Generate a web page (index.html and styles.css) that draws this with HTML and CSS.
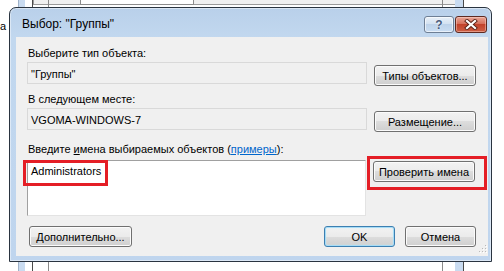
FILE: index.html
```html
<!DOCTYPE html>
<html lang="ru">
<head>
    <meta charset="UTF-8">
    <title>Выбор: "Группы"</title>
    <link rel="stylesheet" href="styles.css">
</head>
<body>
    <div class="desk">
        <div class="desk-bar"></div>
        <div class="desk-bar-inner"></div>
        <div class="desk-strip left"></div>
        <div class="desk-line l1"></div>
        <div class="desk-line l2"></div>
        <div class="desk-strip right"></div>
        <div class="desk-line r1"></div>
        <div class="desk-line r2"></div>
        <span class="desk-char">а</span>
    </div>

    <div class="window">
        <div class="titlebar">
            <span class="title">Выбор: "Группы"</span>
            <div class="caption-btns">
                <span class="cap help">?</span>
                <span class="cap close">
                    <svg width="14" height="11" viewBox="0 0 14 11">
                        <path d="M3 2 L11 9 M11 2 L3 9" stroke="#5a2218" stroke-width="4" stroke-linecap="square"/>
                        <path d="M3 2 L11 9 M11 2 L3 9" stroke="#fff" stroke-width="2.2" stroke-linecap="square"/>
                    </svg>
                </span>
            </div>
        </div>

        <div class="client">
            <div class="label">Выберите тип объекта:</div>
            <div class="row">
                <div class="field">"Группы"</div>
                <button class="btn side">Типы объектов...</button>
            </div>

            <div class="label second">В следующем месте:</div>
            <div class="row">
                <div class="field">VGOMA-WINDOWS-7</div>
                <button class="btn side">Размещение...</button>
            </div>

            <div class="label third">Введите <span class="key">и</span>мена выбираемых объектов (<a href="#" class="link">примеры</a>):</div>
            <div class="row">
                <div class="names">Administrators</div>
                <button class="btn side check">Проверить имена</button>
            </div>

            <div class="footer">
                <button class="btn more">Дополнительно...</button>
                <div class="footer-right">
                    <button class="btn ok">OK</button>
                    <button class="btn">Отмена</button>
                </div>
            </div>

            <div class="mark mark-names"></div>
            <div class="mark mark-check"></div>

            <svg class="grip" width="9" height="9" viewBox="0 0 9 9">
                <rect x="7" y="1" width="1" height="1" fill="#b9b9b9"/>
                <rect x="4" y="4" width="1" height="1" fill="#b9b9b9"/>
                <rect x="7" y="4" width="1" height="1" fill="#b9b9b9"/>
                <rect x="1" y="7" width="1" height="1" fill="#b9b9b9"/>
                <rect x="4" y="7" width="1" height="1" fill="#b9b9b9"/>
                <rect x="7" y="7" width="1" height="1" fill="#b9b9b9"/>
                <rect x="8" y="2" width="1" height="1" fill="#fff"/>
                <rect x="5" y="5" width="1" height="1" fill="#fff"/>
                <rect x="8" y="5" width="1" height="1" fill="#fff"/>
                <rect x="2" y="8" width="1" height="1" fill="#fff"/>
                <rect x="5" y="8" width="1" height="1" fill="#fff"/>
                <rect x="8" y="8" width="1" height="1" fill="#fff"/>
            </svg>
        </div>
    </div>
</body>
</html>
```

FILE: styles.css
```css
* {
    margin: 0;
    padding: 0;
    box-sizing: border-box;
}
body {
    position: relative;
    width: 504px;
    height: 271px;
    overflow: hidden;
    background: #fff;
    font-family: "Liberation Sans", "DejaVu Sans", Arial, sans-serif;
    font-size: 11px;
    line-height: 14px;
    color: #000;
}

/* рабочий стол позади окна */
.desk div,
.desk span {
    position: absolute;
}
.desk-bar {
    left: 33px;
    top: -1px;
    width: 423px;
    height: 6px;
    background: #f0f0f0;
    border: 1px solid #9a9a9a;
}
.desk-bar-inner {
    left: 80px;
    top: -1px;
    width: 114px;
    height: 6px;
    background: #fff;
    border: 1px solid #8c8c8c;
}
.desk-strip {
    top: 0;
    height: 271px;
    background: #c9dbf0;
}
.desk-strip.left {
    left: 18px;
    width: 7px;
    border-left: 1px solid #9fb2c9;
}
.desk-strip.right {
    left: 455px;
    width: 8px;
}
.desk-line {
    top: 0;
    width: 1px;
    height: 271px;
    background: #4a4a4a;
}
.desk-line.l1 { left: 32px; }
.desk-line.l2 { left: 48px; background: #8a8a8a; }
.desk-line.r1 { left: 463px; }
.desk-line.r2 { left: 442px; background: #8a8a8a; }
.desk-char {
    left: 0;
    top: 19px;
    font-size: 11px;
}

/* окно */
.window {
    position: relative;
    z-index: 1;
    display: flex;
    flex-direction: column;
    width: 483px;
    height: 255px;
    margin: 7px 0 0 9px;
    border: 1px solid #2a3440;
    border-radius: 7px 7px 0 0;
    background: linear-gradient(#b9d0ea, #c2d8ef 30px, #bfd5ee);
    box-shadow: inset 0 0 0 1px rgba(255, 255, 255, 0.45);
}
.titlebar {
    display: flex;
    justify-content: space-between;
    align-items: flex-start;
    height: 29px;
    padding: 8px 4px 0 12px;
}
.title {
    margin-top: 1px;
    font-size: 12px;
    color: #000;
}
.caption-btns {
    display: flex;
    gap: 1px;
}
.cap {
    display: flex;
    align-items: center;
    justify-content: center;
    height: 17px;
    border-radius: 3px;
}
.help {
    width: 30px;
    border: 1px solid #6e7f95;
    background: linear-gradient(#e9f0f8, #d3e2f2 45%, #bdd2ea 50%, #cadef3);
    box-shadow: inset 0 0 0 1px rgba(255, 255, 255, 0.6);
    color: #4a5d7e;
    font-size: 12px;
    font-weight: bold;
    text-shadow: 0 0 2px #fff;
}
.close {
    width: 32px;
    border: 1px solid #5e2a21;
    background: linear-gradient(#e9a696, #d6705c 45%, #c2422b 50%, #cd5f45);
    box-shadow: inset 0 0 0 1px rgba(255, 220, 210, 0.45);
}

/* содержимое */
.client {
    position: relative;
    display: flex;
    flex-direction: column;
    height: 219px;
    margin: 0 3px 0 6px;
    padding: 9px 12px 9px 11px;
    background: #f0f0f0;
}
.label {
    height: 14px;
    padding-left: 1px;
    margin-bottom: 2px;
    white-space: nowrap;
}
.label.second {
    margin-top: 6px;
}
.label.third {
    margin-top: 10px;
    margin-bottom: 4px;
}
.key {
    text-decoration: underline;
}
.link {
    color: #0066cc;
    text-decoration: underline;
}
.row {
    display: flex;
    align-items: flex-start;
    gap: 7px;
}
.field {
    width: 340px;
    height: 22px;
    padding: 4px 0 0 3px;
    border: 1px solid #d9d9d9;
    background: #f0f0f0;
    white-space: nowrap;
}
.names {
    width: 339px;
    height: 56px;
    padding: 3px 0 0 3px;
    background: #fff;
    border: 1px solid #e3e3e3;
    border-top-color: #a0a0a0;
    border-left-color: #a0a0a0;
}
.btn {
    height: 21px;
    border: 1px solid #707070;
    border-radius: 3px;
    background: linear-gradient(#f2f2f2, #ebebeb 50%, #dddddd 50%, #cfcfcf);
    box-shadow: inset 0 0 0 1px #fbfbfb;
    font-family: inherit;
    font-size: 11px;
    color: #000;
    width: 71px;
}
.btn.side {
    width: 102px;
    margin-top: 3px;
}
.btn.check {
    margin-top: 1px;
}
.footer {
    display: flex;
    justify-content: space-between;
    margin-top: 10px;
}
.btn.more {
    width: 103px;
    margin-left: 2px;
}
.footer-right {
    display: flex;
    gap: 10px;
}
.btn.ok {
    border-color: #3c7fb1;
    box-shadow: inset 0 0 0 1px #a6dcf6, inset 0 0 3px #c6ecfc;
}

/* красные рамки поверх */
.mark {
    position: absolute;
    border: 3px solid #e41e26;
}
.mark-names {
    left: 7px;
    top: 123px;
    width: 85px;
    height: 26px;
}
.mark-check {
    left: 351px;
    top: 119px;
    width: 120px;
    height: 34px;
}
.grip {
    position: absolute;
    left: 462px;
    top: 207px;
}
```
